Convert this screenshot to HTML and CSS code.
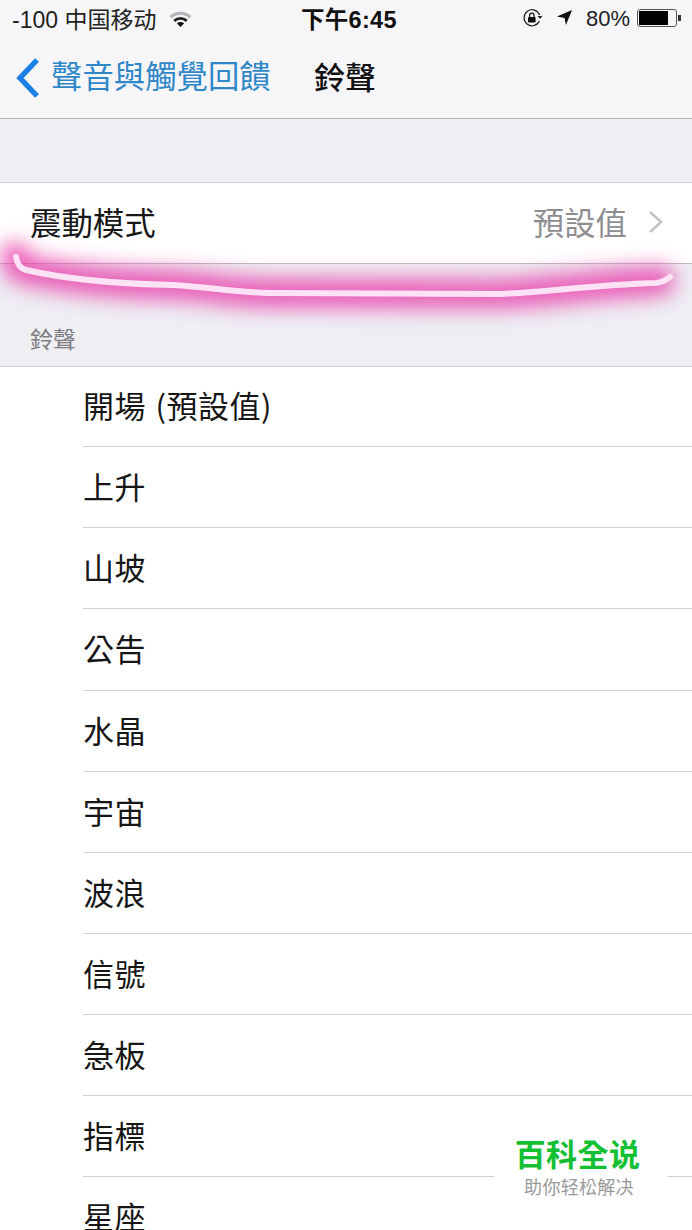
FILE: index.html
```html
<!DOCTYPE html>
<html lang="zh-TW">
<head>
    <meta charset="UTF-8">
    <meta name="viewport" content="width=device-width, initial-scale=1.0">
    <title>鈴聲</title>
    <link rel="stylesheet" href="styles.css">
</head>
<body>
    <div class="phone">
        <div class="top-bar">
            <div class="status-bar">
                <div class="status-left">
                    <span>-100 中国移动</span>
                    <svg class="wifi" width="25" height="17" viewBox="0 0 20 14">
                        <path d="M1 5 A13 13 0 0 1 19 5 L17.3 6.9 A10.6 10.6 0 0 0 2.7 6.9 Z" fill="#b4b4b8"/>
                        <path d="M4 8 A9 9 0 0 1 16 8 L14.4 9.8 A6.6 6.6 0 0 0 5.6 9.8 Z" fill="#222"/>
                        <path d="M7 11 A4.4 4.4 0 0 1 13 11 L10 14 Z" fill="#111"/>
                    </svg>
                </div>
                <div class="status-time">下午6:45</div>
                <div class="status-right">
                    <svg width="22" height="20" viewBox="0 0 22 20">
                        <path d="M17.6 7 A8 8 0 1 0 17.4 13" fill="none" stroke="#222" stroke-width="1.2"/>
                        <path d="M15.5 8 L20.5 8 L18 11 Z" fill="#222"/>
                        <rect x="6" y="9" width="7.6" height="5.6" rx="1" fill="#111"/>
                        <path d="M7.6 9 V7.4 A2.2 2.2 0 0 1 12 7.4 V9" fill="none" stroke="#111" stroke-width="1.2"/>
                    </svg>
                    <svg class="arrow" width="17" height="17" viewBox="0 0 18 18">
                        <path d="M17 1 L1 8 L9 9.5 L10.5 17 Z" fill="#111"/>
                    </svg>
                    <span class="percent">80%</span>
                    <div class="battery">
                        <div class="battery-level"></div>
                    </div>
                    <div class="battery-tip"></div>
                </div>
            </div>
            <div class="nav-bar">
                <svg class="back-icon" width="28" height="42" viewBox="0 0 28 42">
                    <path d="M23 3 L6 21 L23 39" fill="none" stroke="#1c7fe4" stroke-width="5.4"/>
                </svg>
                <span class="back-label">聲音與觸覺回饋</span>
                <span class="nav-title">鈴聲</span>
            </div>
        </div>

        <div class="spacer"></div>

        <div class="vibrate-row">
            <span>震動模式</span>
            <div class="vibrate-value">
                <span>預設值</span>
                <svg width="16" height="24" viewBox="0 0 16 24">
                    <path d="M2 2 L13 12 L2 22" fill="none" stroke="#c4c4c8" stroke-width="2.6"/>
                </svg>
            </div>
        </div>

        <div class="section-head">鈴聲</div>

        <ul class="tone-list">
            <li>開場 (預設值)</li>
            <li>上升</li>
            <li>山坡</li>
            <li>公告</li>
            <li>水晶</li>
            <li>宇宙</li>
            <li>波浪</li>
            <li>信號</li>
            <li>急板</li>
            <li>指標</li>
            <li>星座</li>
        </ul>

        <!-- pink marker stroke over the screenshot -->
        <svg class="scribble" width="692" height="130" viewBox="0 215 692 130">
            <defs>
                <filter id="glow" filterUnits="userSpaceOnUse" x="0" y="215" width="692" height="130">
                    <feGaussianBlur stdDeviation="10"/>
                </filter>
            </defs>
            <path class="scribble-glow" filter="url(#glow)" d="M15 257 Q17 268 26 270 C70 280 120 284 173 285 C210 287 230 292 270 293 L500 294 C550 292 590 285 660 281"/>
            <path class="scribble-line" d="M16 257 Q18 268 26 270 C70 280 120 284 173 285 C210 287 230 292 270 293 L500 294 C550 292 590 285 656 283 Q664 282 670 277"/>
        </svg>

        <div class="watermark">
            <div class="watermark-title">百科全说</div>
            <div class="watermark-sub">助你轻松解决</div>
        </div>
    </div>
</body>
</html>
```

FILE: styles.css
```css
* {
    box-sizing: border-box;
}
body {
    margin: 0;
    background: #fff;
    font-family: "Noto Sans CJK TC", "Liberation Sans", sans-serif;
    color: #161616;
}
.phone {
    position: relative;
    width: 692px;
    height: 1230px;
    overflow: hidden;
    background: #fff;
}
.top-bar {
    height: 119px;
    background: #f6f6f9;
    border-bottom: 1px solid #b2b2b6;
}
.status-bar {
    display: flex;
    justify-content: space-between;
    align-items: center;
    height: 38px;
    padding: 0 11px 3px 12px;
    font-size: 23px;
    position: relative;
    color: #222;
}
.status-left {
    display: flex;
    align-items: center;
    gap: 12px;
    font-family: "Liberation Sans", "Noto Sans CJK SC", sans-serif;
}
.wifi {
    margin-top: 1px;
}
.status-time {
    position: absolute;
    left: 301px;
    top: 1px;
    font-family: "Liberation Sans", "Noto Sans CJK SC", sans-serif;
    font-size: 23.5px;
    font-weight: bold;
    letter-spacing: 0.3px;
    color: #111;
}
.status-right {
    display: flex;
    align-items: center;
    font-family: "Liberation Sans", sans-serif;
}
.arrow {
    margin-left: 12px;
}
.percent {
    margin: 3px 7px 0 13px;
    font-size: 22px;
}
.battery {
    width: 40px;
    height: 18px;
    border: 1px solid #555;
    border-radius: 3px;
    padding: 1px;
}
.battery-level {
    width: 29px;
    height: 100%;
    background: #000;
}
.battery-tip {
    width: 3px;
    height: 6px;
    margin-left: 1px;
    background: #333;
}
.nav-bar {
    display: flex;
    align-items: center;
    height: 80px;
    padding-left: 14px;
    padding-bottom: 1px;
}
.back-icon {
    margin-right: 9px;
}
.back-label {
    width: 263px;
    margin-bottom: 5px;
    font-size: 31.4px;
    line-height: 1;
    color: #2f87c8;
}
.nav-title {
    margin-bottom: 5px;
    font-size: 31px;
    line-height: 1;
    font-weight: 500;
    color: #111;
}
.spacer {
    height: 64px;
    background: #eeeef3;
    border-bottom: 1px solid #d5d5d8;
}
.vibrate-row {
    display: flex;
    justify-content: space-between;
    align-items: center;
    height: 81px;
    padding: 0 28px 3px 30px;
    background: #fff;
    border-bottom: 1px solid #bdbdc1;
    font-size: 31.4px;
}
.vibrate-value {
    display: flex;
    align-items: center;
    gap: 21px;
    color: #8e8e92;
}
.section-head {
    height: 103px;
    padding: 59px 0 0 30px;
    background: #eeeef3;
    border-bottom: 1px solid #cfcfd3;
    font-size: 23px;
    line-height: 30px;
    color: #7d7d82;
}
.tone-list {
    list-style: none;
    margin: 0;
    padding: 0 0 0 83px;
    background: #fff;
}
.tone-list li {
    height: 81.15px;
    padding-top: 16px;
    border-bottom: 1px solid #d0d0d2;
    font-size: 31px;
    line-height: 46px;
    letter-spacing: 0.5px;
    word-spacing: 2px;
}
.tone-list li:first-child {
    height: 80.2px;
    padding-top: 15px;
}
.scribble {
    position: absolute;
    left: 0;
    top: 215px;
}
.scribble-glow {
    fill: none;
    stroke: #e83aa8;
    stroke-width: 30;
    stroke-linecap: round;
    opacity: 0.8;
}
.scribble-line {
    fill: none;
    stroke: #fde2f5;
    stroke-width: 6;
    stroke-linecap: round;
    stroke-linejoin: round;
}
.watermark {
    position: absolute;
    left: 494px;
    top: 1131px;
    width: 174px;
    height: 99px;
    padding: 6px 7px 0 0;
    background: #fff;
    border-radius: 8px;
    text-align: center;
    font-family: "Noto Sans CJK SC", sans-serif;
}
.watermark-title {
    font-size: 31px;
    line-height: 32px;
    font-weight: bold;
    letter-spacing: 0.4px;
    color: #14c033;
}
.watermark-sub {
    margin: 5px 0 0 3px;
    font-size: 18px;
    line-height: 24px;
    letter-spacing: 0.3px;
    color: #999;
}
```
